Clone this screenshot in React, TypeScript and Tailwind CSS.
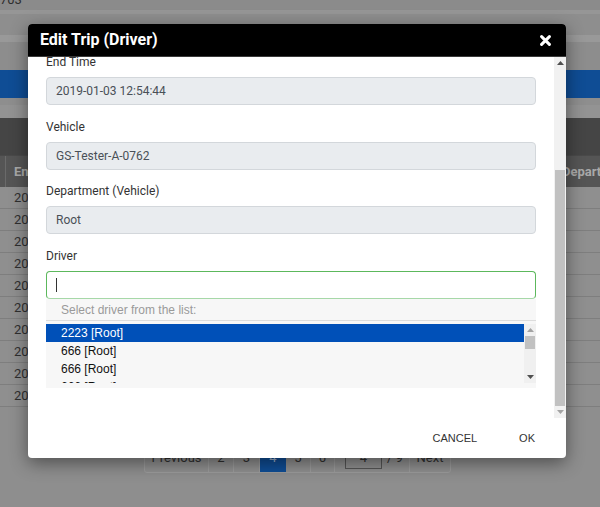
import React from "react";

function Field({ label, value }: { label: string; value: string }) {
  return (
    <div className="flex flex-col">
      <div className="h-[18px] leading-[18px] text-[12px] text-[#333] mb-[6px]">{label}</div>
      <div className="h-[28px] rounded-[4px] border border-[#d3d7db] bg-[#e9ecef] pl-[9px] flex items-center text-[12px] text-[#495057] mb-[12.5px]">
        {value}
      </div>
    </div>
  );
}

function UpArrow({ color }: { color: string }) {
  return (
    <svg width="7" height="4" viewBox="0 0 7 4">
      <path d="M3.5 0 L7 4 L0 4 Z" fill={color} />
    </svg>
  );
}
function DownArrow({ color }: { color: string }) {
  return (
    <svg width="7" height="4" viewBox="0 0 7 4">
      <path d="M0 0 L7 0 L3.5 4 Z" fill={color} />
    </svg>
  );
}

export default function App() {
  const rows = Array.from({ length: 10 });
  const items = ["2223 [Root]", "666 [Root]", "666 [Root]", "666 [Root]"];
  return (
    <div className="relative w-[600px] h-[507px] overflow-hidden bg-[#8e8e8e] font-['Roboto',sans-serif]">
      {/* dimmed background page */}
      <div className="flex flex-col h-full">
        <div className="h-[10px] bg-[#8b8b8b] overflow-hidden shrink-0">
          <div className="-mt-[8px] text-[13px] leading-[15px] text-[#2e2e2e]">703</div>
        </div>
        <div className="h-[4px] bg-[#969696] shrink-0" />
        <div className="h-[21px] bg-[#8e8e8e] shrink-0" />
        <div className="h-[7px] bg-[#999999] shrink-0" />
        <div className="h-[28px] bg-[#8d8d8d] shrink-0" />
        <div className="h-[28px] bg-[#0f4d95] shrink-0" />
        <div className="h-[7px] bg-[#8e8e8e] shrink-0" />
        <div className="h-[13px] bg-[#939393] shrink-0" />
        <div className="h-[37px] bg-[#454545] shrink-0" />
        <div className="h-[32px] bg-[#555555] border-t border-[#4a4a4a] flex items-center shrink-0 whitespace-nowrap">
          <div className="flex items-center h-full w-[562px] shrink-0">
            <div className="ml-[5px] w-[1px] h-full bg-[#6a6a6a]" />
            <span className="ml-[8px] text-[13px] font-bold text-[#a9a9a9]">End</span>
          </div>
          <span className="text-[13px] font-bold text-[#a9a9a9]">Department</span>
        </div>
        {rows.map((_, i) => (
          <div key={i} className="h-[22px] bg-[#8f8f8f] border-b border-[#7e7e7e] flex items-center shrink-0">
            <span className="ml-[14px] text-[13px] text-[#2f2f2f]">2019</span>
          </div>
        ))}
        <div className="h-[36px] shrink-0" />
        <div className="flex shrink-0">
          <div className="ml-[144px] h-[30px] flex border border-[#9c9c9c] rounded-[3px] text-[13px] text-[#2f2f2f] bg-[#909090]">
            <div className="w-[64px] flex items-center justify-center border-r border-[#9c9c9c]">Previous</div>
            <div className="w-[25px] flex items-center justify-center border-r border-[#9c9c9c]">2</div>
            <div className="w-[26px] flex items-center justify-center border-r border-[#9c9c9c]">3</div>
            <div className="w-[26px] flex items-center justify-center bg-[#0f4d95] text-[#9fb3cc]">4</div>
            <div className="w-[25px] flex items-center justify-center border-r border-[#9c9c9c]">5</div>
            <div className="w-[24px] flex items-center justify-center border-r border-[#9c9c9c]">6</div>
            <div className="w-[75px] flex items-center border-r border-[#9c9c9c]">
              <div className="ml-[10px] w-[37px] h-[22px] border border-[#555] flex items-center justify-center">4</div>
              <span className="ml-[5px]">/ 9</span>
            </div>
            <div className="w-[40px] flex items-center justify-center">Next</div>
          </div>
        </div>
      </div>

      {/* modal */}
      <div className="absolute left-[28px] top-[24px] w-[538px] h-[434px] bg-white rounded-[4px] shadow-[0_5px_18px_rgba(0,0,0,0.45)] flex flex-col overflow-hidden">
        <div className="h-[33px] bg-black border-b border-[#3a3a3a] flex items-center justify-between pl-[12px] pr-[15px] shrink-0">
          <span className="text-white font-bold text-[16px] leading-none">Edit Trip (Driver)</span>
          <svg width="11" height="11" viewBox="0 0 11 11">
            <path d="M1.6 1.6 L9.4 9.4 M9.4 1.6 L1.6 9.4" stroke="white" strokeWidth="3" strokeLinecap="round" />
          </svg>
        </div>
        <div className="flex h-[361px] shrink-0">
          <div className="flex-1 overflow-hidden">
            <div className="-mt-[4px] px-[18px] flex flex-col">
              <Field label="End Time" value="2019-01-03 12:54:44" />
              <Field label="Vehicle" value="GS-Tester-A-0762" />
              <Field label="Department (Vehicle)" value="Root" />
              <div className="h-[18px] leading-[18px] text-[12px] text-[#333] mb-[6px]">Driver</div>
              <div className="h-[28px] rounded-[4px] border border-[#5cb85c] border-b-[#a6d8a8] bg-white flex items-center">
                <div className="ml-[9px] w-[1px] h-[14px] bg-[#333]" />
              </div>
              <div className="bg-[#f7f7f7] flex flex-col font-['Liberation_Sans',Arial,sans-serif]">
                <div className="h-[22px] leading-[22px] pl-[15px] text-[12px] text-[#9a9a9a] border-b border-[#dcdcdc]">
                  Select driver from the list:
                </div>
                <div className="mt-[3px] h-[59px] flex overflow-hidden">
                  <div className="flex-1 flex flex-col">
                    {items.map((t, i) => (
                      <div
                        key={i}
                        className={
                          i === 0
                            ? "h-[18px] leading-[18px] shrink-0 pl-[15px] text-[12px] bg-[#0050b8] text-white"
                            : "h-[18px] leading-[18px] shrink-0 pl-[15px] text-[12px] text-[#111]"
                        }
                      >
                        {t}
                      </div>
                    ))}
                  </div>
                  <div className="w-[12px] bg-[#f0f0f0] flex flex-col items-center">
                    <div className="h-[12px] flex items-center justify-center">
                      <UpArrow color="#a3a3a3" />
                    </div>
                    <div className="w-[10px] h-[13px] bg-[#c1c1c1]" />
                    <div className="flex-1" />
                    <div className="h-[12px] flex items-center justify-center">
                      <DownArrow color="#505050" />
                    </div>
                  </div>
                </div>
                <div className="h-[5px]" />
              </div>
            </div>
          </div>
          <div className="w-[12px] bg-[#f1f1f1] flex flex-col items-center shrink-0">
            <div className="h-[12px] flex items-center justify-center">
              <UpArrow color="#505050" />
            </div>
            <div className="h-[101px]" />
            <div className="w-[10px] h-[236px] bg-[#c1c1c1]" />
            <div className="h-[12px] flex items-center justify-center">
              <DownArrow color="#a3a3a3" />
            </div>
          </div>
        </div>
        <div className="flex-1 flex items-center justify-end gap-[42px] pr-[31px] text-[11px] text-[#333] font-['Liberation_Sans',Arial,sans-serif]">
          <span>CANCEL</span>
          <span>OK</span>
        </div>
      </div>
    </div>
  );
}
